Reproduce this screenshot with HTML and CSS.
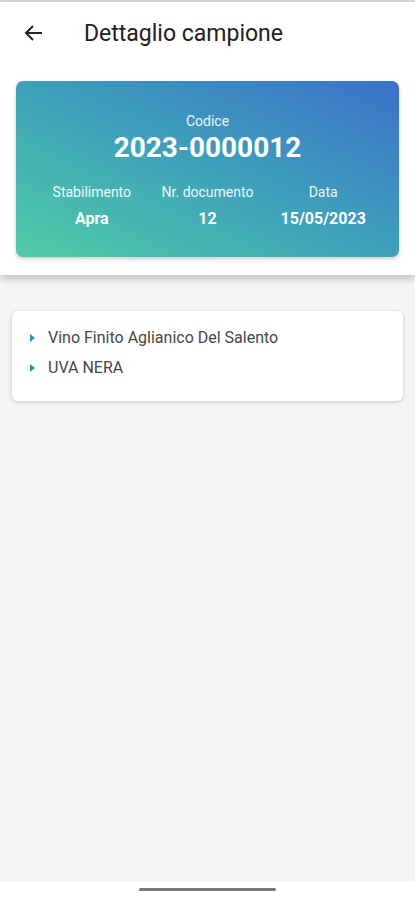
FILE: index.html
```html
<!doctype html>
<html lang="it">
<head>
    <meta charset="UTF-8">
    <meta name="viewport" content="width=device-width, initial-scale=1.0">
    <title>Dettaglio campione</title>
    <link rel="stylesheet" href="styles.css">
</head>
<body>
    <div class="status-line"></div>
    <div class="top">
        <div class="header">
            <svg class="back" width="24" height="24" viewBox="0 0 24 24">
                <path d="M20 12H5M11 5l-7 7 7 7" fill="none" stroke="#222" stroke-width="2"/>
            </svg>
            <h1>Dettaglio campione</h1>
        </div>
        <div class="card">
            <p class="label">Codice</p>
            <p class="code">2023-0000012</p>
            <div class="info">
                <div class="col">
                    <p class="label">Stabilimento</p>
                    <p class="value">Apra</p>
                </div>
                <div class="col">
                    <p class="label">Nr. documento</p>
                    <p class="value">12</p>
                </div>
                <div class="col">
                    <p class="label">Data</p>
                    <p class="value">15/05/2023</p>
                </div>
            </div>
        </div>
    </div>
    <div class="main">
        <ul class="list">
            <li>Vino Finito Aglianico Del Salento</li>
            <li>UVA NERA</li>
        </ul>
    </div>
    <div class="navbar">
        <span class="handle"></span>
    </div>
</body>
</html>
```
FILE: styles.css
```css
*{
    margin:0;
    padding:0;
    box-sizing: border-box;
}
ul{
    list-style: none;
}
body{
    width:415px;
    height:900px;
    font-family: Roboto, "Noto Sans", sans-serif;
    background-color: #f5f5f7;
    display:flex;
    flex-direction: column;
    overflow:hidden;
}
.status-line{
    height:2px;
    background-color: #d8d8d8;
}
.top{
    background-color: #fff;
    padding:0 16px 18px;
    box-shadow: 0 4px 8px rgba(0,0,0,0.22);
    position: relative;
}
.header{
    height:62px;
    display:flex;
    align-items: center;
}
.back{
    margin-left: 6px;
    margin-right: 38px;
}
.header h1{
    font-size: 23px;
    font-weight: 400;
    color:#212121;
}
.card{
    margin-top: 17px;
    height:176px;
    border-radius: 7px;
    background: linear-gradient(to top right, #4fcca5 0%, #3ea1bb 50%, #3c70ca 100%);
    box-shadow: 0 2px 4px rgba(0,0,0,0.2);
    color:#fff;
    text-align: center;
    padding:32px 18px 0;
}
.label{
    font-size: 14px;
    line-height: 17px;
    opacity: 0.92;
}
.code{
    font-size: 28px;
    font-weight: 700;
    line-height: 32px;
    margin-top: 2px;
}
.info{
    display:flex;
    margin-top: 20px;
}
.col{
    flex:1;
}
.value{
    font-size: 16px;
    font-weight: 700;
    line-height: 20px;
    margin-top: 8px;
}
.main{
    flex:1;
    padding:36px 12px 0;
}
.list{
    background-color: #fff;
    border-radius: 6px;
    box-shadow: 0 1px 4px rgba(0,0,0,0.2);
    padding:12px 0 18px 18px;
}
.list li{
    font-size: 16px;
    line-height: 30px;
    color:#474747;
    display:flex;
    align-items: center;
}
.list li::before{
    content:"";
    border-left: 5px solid #2796b4;
    border-top: 4px solid transparent;
    border-bottom: 4px solid transparent;
    margin-right: 13px;
}
.navbar{
    height:18px;
    background-color: #fff;
    display:flex;
    justify-content: center;
    padding-top: 6px;
}
.handle{
    width:137px;
    height:3px;
    border-radius: 2px;
    background-color: #777;
}
```
